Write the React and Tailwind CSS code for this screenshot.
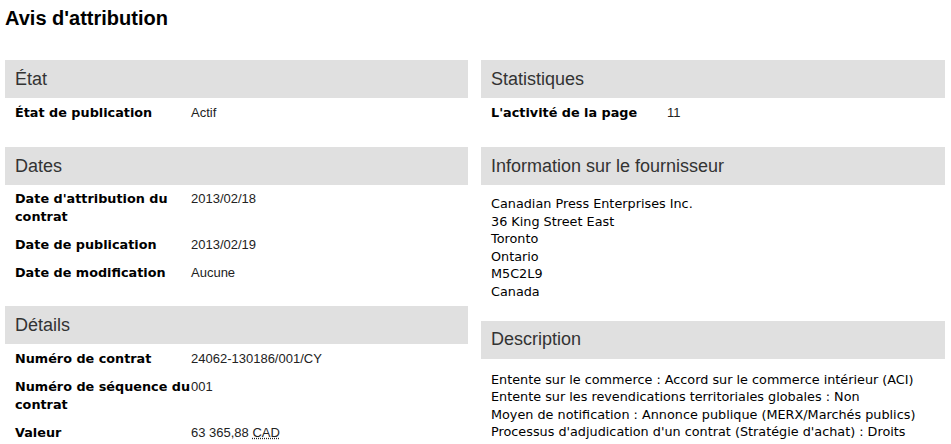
const labelCls = "w-[176px] shrink-0 font-['DejaVu_Sans',sans-serif] text-[12.8px] font-bold text-black";
const valueCls = "font-['Liberation_Sans',Arial,sans-serif] text-[13px] text-[#222]";

const Header = ({ title }) => (
  <div className="flex h-[38px] items-center bg-[#e0e0e0] px-[10px] font-['Liberation_Sans',Arial,sans-serif] text-[18px] text-[#333]">
    {title}
  </div>
);

const Row = ({ label, children }) => (
  <div className="flex py-[5px] pl-[10px] leading-[18px]">
    <div className={labelCls}>{label}</div>
    <div className={valueCls}>{children}</div>
  </div>
);

const Section = ({ title, children, mb = 'mb-[20px]' }) => (
  <section className={mb}>
    <Header title={title} />
    {children}
  </section>
);

const Plain = ({ lines, pt }) => (
  <div className={`px-[10px] ${pt} font-['DejaVu_Sans',Verdana,sans-serif] text-[12.8px] leading-[17.6px] text-black`}>
    {lines.map((l) => (
      <div key={l}>{l}</div>
    ))}
  </div>
);

export default function App() {
  return (
    <div className="h-[444px] w-[951px] overflow-hidden bg-white px-[5px]">
      <h1 className="pt-[6px] font-['Liberation_Sans',Arial,sans-serif] text-[20px] font-bold leading-[24px] text-black">
        Avis d'attribution
      </h1>
      <div className="mt-[30px] grid grid-cols-[463px_464px] gap-x-[13px]">
        <div>
          <Section title="État">
            <div className="pt-[1px]">
              <Row label="État de publication">Actif</Row>
            </div>
          </Section>
          <Section title="Dates" mb="mb-[19px]">
            <Row label="Date d'attribution du contrat">2013/02/18</Row>
            <Row label="Date de publication">2013/02/19</Row>
            <Row label="Date de modification">Aucune</Row>
          </Section>
          <Section title="Détails">
            <div className="pt-[1px]">
              <Row label="Numéro de contrat">24062-130186/001/CY</Row>
              <Row label="Numéro de séquence du contrat">001</Row>
              <Row label="Valeur">
                63 365,88{' '}
                <abbr title="Dollars canadiens" className="underline decoration-dotted">
                  CAD
                </abbr>
              </Row>
            </div>
          </Section>
        </div>
        <div>
          <Section title="Statistiques">
            <div className="pt-[1px]">
              <Row label="L'activité de la page">11</Row>
            </div>
          </Section>
          <Section title="Information sur le fournisseur">
            <Plain
              pt="pt-[10px]"
              lines={[
                'Canadian Press Enterprises Inc.',
                '36 King Street East',
                'Toronto',
                'Ontario',
                'M5C2L9',
                'Canada',
              ]}
            />
          </Section>
          <Section title="Description">
            <Plain
              pt="pt-[12px]"
              lines={[
                'Entente sur le commerce : Accord sur le commerce intérieur (ACI)',
                'Entente sur les revendications territoriales globales : Non',
                'Moyen de notification : Annonce publique (MERX/Marchés publics)',
                "Processus d'adjudication d'un contrat (Stratégie d'achat) : Droits",
              ]}
            />
          </Section>
        </div>
      </div>
    </div>
  );
}
